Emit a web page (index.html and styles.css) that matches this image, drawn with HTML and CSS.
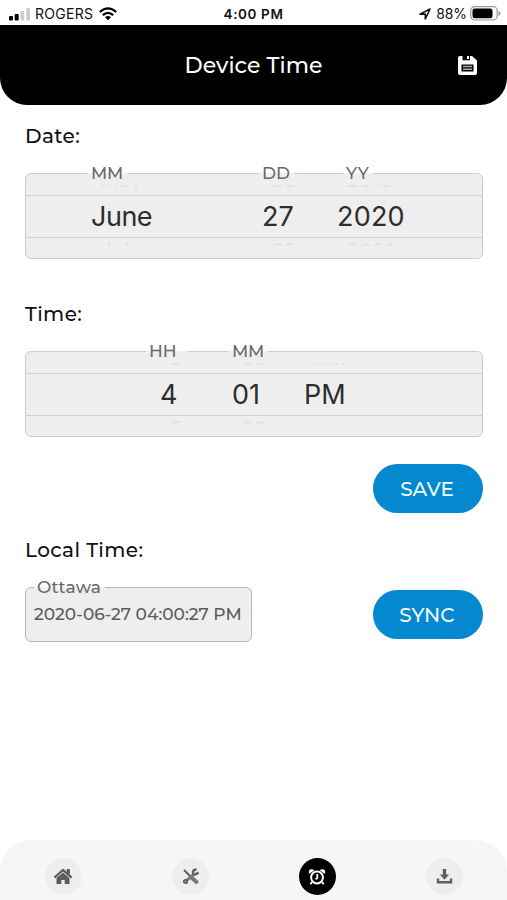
FILE: index.html
```html
<!DOCTYPE html>
<html lang="en">
<head>
<meta charset="utf-8">
<title>Device Time</title>
<link rel="stylesheet" href="styles.css">
</head>
<body>
<div class="app">
  <div class="status">
    <div class="carrier">
      <svg width="22" height="14" viewBox="0 0 22 14"><rect x="0" y="9" width="4" height="4.500" rx="1"/><rect x="5.700" y="7" width="4" height="6.500" rx="1"/><rect x="11.500" y="4" width="3.800" height="9.500" rx="1" fill="#ccc"/><rect x="17.200" y="1" width="3.800" height="12.500" rx="1" fill="#ccc"/></svg>
      <span class="carrier-name">ROGERS</span>
      <svg class="wifi" width="18" height="14" viewBox="0 0 18 14" fill="none" stroke="#000" stroke-width="2.300"><path d="M.8 5Q9-2.200 17.200 5"/><path d="M3.800 8.100Q9 3.600 14.200 8.100"/><path d="M6 10.200Q9 7.800 12 10.200L9 13.300Z" fill="#000" stroke="none"/></svg>
    </div>
    <span class="clock">4:00 PM</span>
    <div class="power">
      <svg width="12" height="12" viewBox="0 0 12 12" fill="none" stroke="#111" stroke-width="1.600" stroke-linejoin="round"><path d="M1 6.100 11 1 6.300 11V6.100Z"/></svg>
      <span class="percent">88%</span>
      <svg class="battery" width="31" height="15" viewBox="0 0 31 15"><rect x=".7" y=".7" width="26.500" height="13.300" rx="4" fill="#fff" stroke="#999" stroke-width="1.200"/><rect x="2.500" y="2.500" width="20" height="9.700" rx="2.300"/><path d="M28.500 5v5q2-1 2-2.500t-2-2.500" fill="#999"/></svg>
    </div>
  </div>

  <header class="header">
    <h1 class="title">Device Time</h1>
    <svg class="disk" width="19" height="19" viewBox="0 0 19 19"><path fill="#fff" d="M2 0H4.500V4.300H12V0H14L19 4.500V17q0 2-2 2H2q-2 0-2-2V2Q0 0 2 0M9 0h2v3H9Z"/><path d="M3.500 8.500h12v7h-12Z"/><path d="M5 10.500h9M5 13.200h9" stroke="#aaa" stroke-width="1.400"/></svg>
  </header>

  <main class="content">
    <h2 class="heading date-heading">Date:</h2>
    <section class="picker date">
      <span class="legend l-month">MM</span><span class="legend l-day">DD</span><span class="legend l-year">YY</span>
      <div class="row ghost above"><span>May</span><span>26</span><span>2019</span></div>
      <div class="row current"><span class="month">June</span><span>27</span><span class="year">2020</span></div>
      <div class="row ghost below"><span>July</span><span>28</span><span>2021</span></div>
    </section>

    <h2 class="heading time-heading">Time:</h2>
    <section class="picker time">
      <span class="legend l-hour">HH</span><span class="legend l-minute">MM</span>
      <div class="row ghost above"><span>3</span><span>00</span><span>AM</span></div>
      <div class="row current"><span>4</span><span>01</span><span>PM</span></div>
      <div class="row ghost below"><span>5</span><span>02</span></div>
    </section>

    <div class="actions"><button class="button save">SAVE</button></div>

    <h2 class="heading local-heading">Local Time:</h2>
    <div class="local">
      <div class="local-box"><span class="legend l-city">Ottawa</span><span class="stamp">2020-06-27 04:00:27 PM</span></div>
      <button class="button sync">SYNC</button>
    </div>
  </main>

  <nav class="tabs">
    <a class="tab"><span class="disc"><svg width="20" height="17" viewBox="0 0 20 17" fill="#5c5c5c"><path d="M10 .5 19.300 8.700 18 10.400 10 3.500 2 10.400.7 8.700ZM13.700 1h3.200v5.500l-3.200-2.500Z"/><path d="M3.500 10 10 4.500 16.500 10v6h-4.800v-4H8.300v4H3.500Z"/></svg></span></a>
    <a class="tab"><span class="disc"><svg width="18" height="17" viewBox="0 0 18 17" fill="none" stroke="#5f5f5f"><path d="m2 2 6.500 6.500" stroke-width="2"/><path d="m9.500 9.500 5 4.500" stroke-width="4" stroke="#777" stroke-linecap="round"/><path d="M3.500 13.500 12 6" stroke-width="3" stroke="#777"/><circle cx="3.500" cy="13.500" r="1.700" stroke-width="1.800"/><path d="M14.500 1.500Q10.500 1.500 11 5T16.500 4.500" stroke-width="2.400"/></svg></span></a>
    <a class="tab"><span class="disc active"><svg width="18" height="18" viewBox="0 0 18 18" fill="none" stroke="#fff"><circle cx="9" cy="9.500" r="5.900" stroke-width="2"/><path d="M9.300 6v4L7.500 11.300M4 14l-1.700 2.300M14 14l1.700 2.300" stroke-width="1.800"/><path d="M1 6Q0 1.500 3.500 1.300 5.500 1.300 6.200 2.500ZM17 6Q18 1.500 14.500 1.300 12.500 1.300 11.800 2.500Z" fill="#fff" stroke="none"/></svg></span></a>
    <a class="tab"><span class="disc"><svg width="17" height="17" viewBox="0 0 17 17" fill="#5f5f5f"><path d="M6.800 1h3.400v5.500h3L8.500 11.700 3.800 6.500h3Z"/><path d="M2 10.500V14.300h13v-3.800" fill="none" stroke="#5f5f5f" stroke-width="2.400"/></svg></span></a>
  </nav>
</div>
</body>
</html>
```

FILE: styles.css
```css
* { box-sizing: border-box; }

body {
  margin: 0;
  background: #fff;
  font-family: Montserrat, Inter, "Liberation Sans", sans-serif;
  color: #111;
}

.app {
  display: flex;
  flex-direction: column;
  width: 507px;
  height: 900px;
  overflow: hidden;
}

.status {
  display: grid;
  grid-template-columns: 1fr auto 1fr;
  align-items: center;
  height: 25px;
  padding: 2px 6px 0 9px;
  font: 14px/20px Inter, sans-serif;
}

.carrier, .power { display: flex; align-items: center; }
.carrier-name { margin-left: 4px; letter-spacing: .3px; }
.wifi { margin-left: 6px; }
.clock { margin-right: 3px; font-weight: 600; font-size: 13.5px; letter-spacing: .6px; }
.power { justify-content: flex-end; }
.percent { margin-left: 5px; letter-spacing: -.1px; }
.battery { margin-left: 3px; }

.header {
  display: grid;
  grid-template-columns: 1fr auto 1fr;
  align-items: center;
  height: 80px;
  border-radius: 0 0 27px 27px;
  background: #000;
  color: #fff;
}

.title {
  grid-column: 2;
  margin: 2px 0 0;
  font-size: 22px;
  font-weight: 500;
  line-height: 28px;
  letter-spacing: .05px;
}

.disk { justify-self: end; margin-right: 30px; }

.content { flex: 1; padding: 0 24px 0 25px; }

.heading {
  margin: 0;
  font-size: 20px;
  font-weight: 500;
  line-height: 26px;
  letter-spacing: .4px;
}

.date-heading { padding-top: 18px; }
.time-heading { padding-top: 42px; }
.local-heading { padding-top: 24px; }

.picker {
  position: relative;
  height: 86px;
  margin-top: 24px;
  border: 1px solid #ccc;
  border-radius: 6px;
  background: #eee;
  font-family: Inter, sans-serif;
}

.row { display: grid; }
.date .row { grid-template-columns: 171px 75px 1fr; padding-left: 65px; }
.time .row { grid-template-columns: 72px 72px 1fr; padding-left: 134px; }

.current {
  height: 43px;
  border: solid #d0d0d0;
  border-width: 1px 0;
  color: #2d2d2d;
  font-size: 27px;
  line-height: 41px;
}

.month { letter-spacing: -.5px; }
.year { letter-spacing: .2px; }

.ghost {
  overflow: hidden;
  color: #e2e2e2;
  font-size: 21px;
}

.above { height: 5px; margin: 11px 0 5px; }
.above span { margin: -15px 0 0 9px; line-height: 20px; }
.below { height: 3px; margin-top: 5px; }
.below span { margin: -2px 0 0 9px; line-height: 22px; }

.legend {
  position: absolute;
  top: -11px;
  z-index: 1;
  color: #6a6a6a;
  font-family: Montserrat, Inter, sans-serif;
  font-size: 17px;
  font-weight: 500;
  line-height: 20px;
}

.legend::before {
  content: "";
  position: absolute;
  z-index: -1;
  top: 10px;
  left: -3px;
  right: -4px;
  height: 2px;
  background: #f1f1f1;
}

.l-month { left: 65px; letter-spacing: -.3px; }
.l-day { left: 236px; }
.l-year { left: 320px; }
.l-hour { left: 123px; }
.l-hour::before { right: -10px; }
.l-minute { left: 206px; letter-spacing: -.3px; }
.l-city { left: 11px; letter-spacing: .2px; }

.actions { display: flex; justify-content: flex-end; margin-top: 27px; }

.button {
  width: 110px;
  height: 49px;
  padding: 1px 2px 0 0;
  border: 0;
  border-radius: 25px;
  background: #0488cf;
  color: #eefaff;
  font: 500 20px/48px Montserrat, Inter, sans-serif;
}

.local {
  display: flex;
  align-items: flex-start;
  justify-content: space-between;
  margin-top: 24px;
}

.local-box {
  position: relative;
  width: 227px;
  height: 55px;
  padding: 16px 0 0 8px;
  border: 1.500px solid #b8b8b8;
  border-radius: 6px;
  background: #eee;
}

.stamp {
  display: block;
  color: #5c5c5c;
  font-size: 17px;
  font-weight: 500;
  line-height: 20px;
  white-space: nowrap;
}

.sync { margin-top: 3px; }

.tabs {
  display: grid;
  grid-template-columns: repeat(4, 1fr);
  height: 60px;
  padding-top: 18px;
  border-radius: 32px 32px 0 0;
  background: #f6f6f6;
}

.tab { display: flex; justify-content: center; height: 37px; }
.tab + .tab { border-left: 1px solid #f3f3f3; }

.disc {
  display: flex;
  align-items: center;
  justify-content: center;
  width: 37px;
  height: 37px;
  border-radius: 50%;
  background: #eee;
}

.active { background: #000; }
```
